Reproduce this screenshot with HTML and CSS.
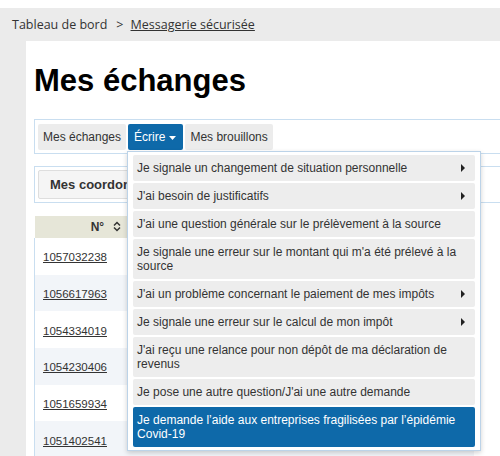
FILE: index.html
```html
<!DOCTYPE html>
<html lang="fr">
<head>
<meta charset="utf-8">
<title>Mes échanges</title>
<link rel="stylesheet" href="styles.css">
</head>
<body>
<nav class="crumbs">
  <span class="crumb">Tableau de bord</span>
  <span class="sep">&gt;</span>
  <a class="crumb-link" href="#">Messagerie sécurisée</a>
</nav>
<main class="panel">
  <h1 class="title">Mes échanges</h1>

  <div class="tabs-box">
    <ul class="tabs">
      <li class="tab">Mes échanges</li>
      <li class="tab tab-active">Écrire
        <svg class="caret" width="7" height="4" viewBox="0 0 7 4"><path d="M0 0h7L3.5 4z" fill="#fff"/></svg>
        <ul class="menu">
          <li class="menu-item has-sub">Je signale un changement de situation personnelle<span class="arrow"></span></li>
          <li class="menu-item has-sub">J'ai besoin de justificatifs<span class="arrow"></span></li>
          <li class="menu-item">J'ai une question générale sur le prélèvement à la source</li>
          <li class="menu-item">Je signale une erreur sur le montant qui m'a été prélevé à la source</li>
          <li class="menu-item has-sub">J'ai un problème concernant le paiement de mes impôts<span class="arrow"></span></li>
          <li class="menu-item has-sub">Je signale une erreur sur le calcul de mon impôt<span class="arrow"></span></li>
          <li class="menu-item">J'ai reçu une relance pour non dépôt de ma déclaration de revenus</li>
          <li class="menu-item">Je pose une autre question/J'ai une autre demande</li>
          <li class="menu-item menu-item-active">Je demande l’aide aux entreprises fragilisées par l’épidémie Covid-19</li>
        </ul>
      </li>
      <li class="tab">Mes brouillons</li>
    </ul>
  </div>

  <div class="coord-box">
    <button class="coord-btn">Mes coordonnées</button>
  </div>

  <table class="grid">
    <thead>
      <tr>
        <th class="col-num">N°
          <svg class="sort" width="8" height="11" viewBox="0 0 8 11"><path d="M1 4.5L4 1.5L7 4.5M1 6.5L4 9.5L7 6.5" fill="none" stroke="#333" stroke-width="1.5"/></svg>
        </th>
        <th class="col-rest"></th>
      </tr>
    </thead>
    <tbody>
      <tr><td class="col-num"><a href="#">1057032238</a></td><td></td></tr>
      <tr class="alt"><td class="col-num"><a href="#">1056617963</a></td><td></td></tr>
      <tr><td class="col-num"><a href="#">1054334019</a></td><td></td></tr>
      <tr class="alt"><td class="col-num"><a href="#">1054230406</a></td><td></td></tr>
      <tr><td class="col-num"><a href="#">1051659934</a></td><td></td></tr>
      <tr class="alt"><td class="col-num"><a href="#">1051402541</a></td><td></td></tr>
    </tbody>
  </table>
</main>
</body>
</html>
```

FILE: styles.css
```css
html, body {
  margin: 0;
  padding: 0;
}
body {
  background: #ebebeb;
  border-top: 8px solid #fff;
  font-family: "Liberation Sans", Arial, sans-serif;
  color: #333;
  height: 448px;
  overflow: hidden;
}
.crumbs {
  height: 33px;
  line-height: 34px;
  padding-left: 12px;
  font-family: "Open Sans", sans-serif;
  font-size: 12.5px;
  color: #333;
  display: flex;
}
.sep {
  margin: 0 7px 0 9px;
}
.crumb-link {
  color: #333;
  text-decoration: underline;
}
.panel {
  box-sizing: border-box;
  margin-left: 26px;
  background: #fff;
  padding: 22px 0 0 8px;
  height: 415px;
  overflow: hidden;
}
.title {
  margin: 0;
  font-size: 31px;
  line-height: 36px;
  font-weight: bold;
  color: #000;
}
.tabs-box {
  margin-top: 20px;
  border: 1px solid #c9def0;
  border-right: 0;
  padding: 4px 3px 3px;
}
.tabs {
  list-style: none;
  margin: 0;
  padding: 0;
  display: flex;
  gap: 2px;
}
.tab {
  position: relative;
  height: 26px;
  line-height: 26px;
  padding: 0 5px;
  font-size: 12px;
  background: #ececec;
  border-radius: 2px;
  color: #333;
  display: flex;
  align-items: center;
  gap: 4px;
}
.tab-active {
  background: #0e69a9;
  color: #fff;
  padding: 0 7px 0 6px;
}
.caret {
  margin-top: 1px;
}
.menu {
  position: absolute;
  left: -1px;
  top: 27px;
  width: 342px;
  margin: 0;
  padding: 3px 5px;
  list-style: none;
  background: #fff;
  border: 1px solid #bcd3e8;
  box-shadow: 0 2px 5px rgba(0, 0, 0, 0.18);
  z-index: 5;
  display: flex;
  flex-direction: column;
  gap: 2px;
}
.menu-item {
  position: relative;
  background: #ededed;
  border-radius: 2px;
  padding: 6px 4px 6px 4px;
  line-height: 14px;
  font-size: 12px;
  color: #333;
}
.menu-item.has-sub {
  padding-right: 24px;
}
.menu-item-active {
  background: #0e69a9;
  color: #fff;
}
.arrow {
  position: absolute;
  right: 10px;
  top: 9px;
  width: 0;
  height: 0;
  border-top: 4px solid transparent;
  border-bottom: 4px solid transparent;
  border-left: 4px solid #222;
}
.coord-box {
  margin-top: 12px;
  border: 1px solid #c9def0;
  border-right: 0;
  padding: 3px;
}
.coord-btn {
  display: block;
  height: 29px;
  width: 300px;
  text-align: left;
  padding: 0 11px;
  background: #f5f5f5;
  border: 1px solid #dedede;
  border-radius: 2px;
  font-family: "Liberation Sans", Arial, sans-serif;
  font-weight: bold;
  font-size: 13px;
  color: #333;
}
.grid {
  margin-top: 13px;
  border-collapse: collapse;
  width: 440px;
}
.grid th {
  background: #e6e6d8;
  height: 22px;
  padding: 0;
  font-size: 12px;
  font-weight: bold;
  color: #333;
}
.grid th.col-num {
  text-align: right;
  padding-right: 6px;
  width: 86px;
}
.sort {
  margin-left: 5px;
  vertical-align: -1px;
}
.grid tbody tr {
  height: 36.7px;
}
.grid tbody tr.alt {
  background: #f2f5f9;
}
.grid tbody td.col-num {
  border-left: 1px solid #c9def0;
  padding: 2px 0 0 8px;
  font-size: 11.5px;
}
.grid tbody td.col-num a {
  color: #333;
  text-decoration: underline;
}
```
